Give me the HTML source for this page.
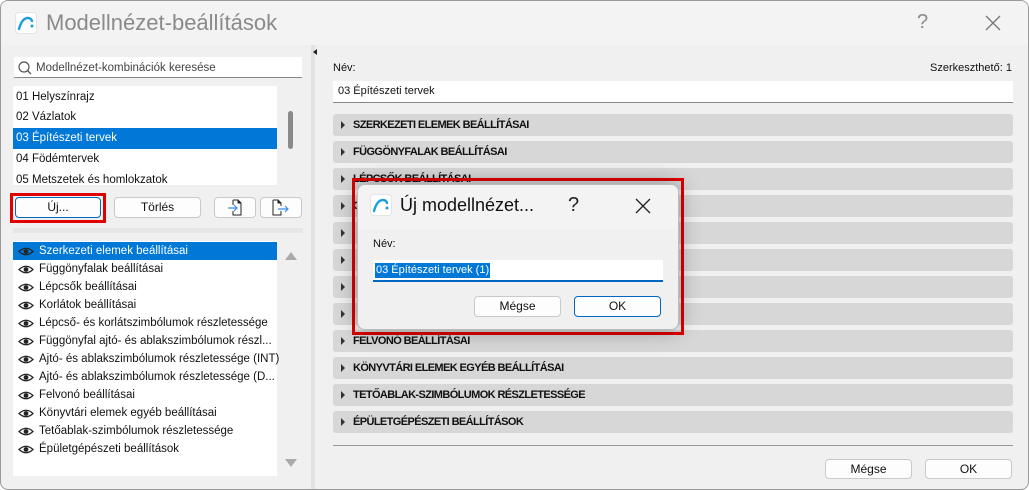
<!DOCTYPE html>
<html><head><meta charset="utf-8"><style>
*{box-sizing:border-box;margin:0;padding:0}
body{width:1029px;height:490px;background:#fff;font-family:"Liberation Sans",sans-serif;font-size:12px;color:#111;position:relative;overflow:hidden}
.abs{position:absolute}
.win{left:0;top:0;width:1029px;height:490px;border:1px solid #9a9a9a;border-radius:8px;background:#f0f0f0;overflow:hidden}
.tb{left:0;top:0;width:1029px;height:44px;background:#f3f3f3}
.btn{position:absolute;background:#fdfdfd;border:1px solid #c9c9c9;border-radius:4px;text-align:center;line-height:19px;font-size:12px;color:#111}
.row{position:absolute;left:332px;width:680px;height:22px;background:#d7d7d7;border-radius:3px;font-weight:bold;font-size:11px;line-height:22px;padding-left:20px;letter-spacing:-0.6px;color:#111}
.row:before{content:"";position:absolute;left:8px;top:7px;border-left:4px solid #333;border-top:4px solid transparent;border-bottom:4px solid transparent}
.it{position:absolute;left:12px;width:264px;height:18px;line-height:18px;padding-left:26px;font-size:11.5px;white-space:nowrap}
.it.sel{background:#0078d7;color:#fff}
.eye{position:absolute;left:5px;top:5px;width:16px;height:9px}
.li{position:absolute;left:12px;width:264px;height:21px;line-height:21px;padding-left:3px;font-size:11.5px}
</style></head><body>
<div class="abs win">
<div class="abs tb"></div>
<svg class="abs" style="left:14px;top:11px" width="22" height="22" viewBox="0 0 22 22"><rect x="0.5" y="0.5" width="21" height="21" rx="3" fill="#fff" stroke="#e4e4e4"/><path d="M4 17 Q7 6 13 6 Q16 6 17 9" fill="none" stroke="#1aa0d8" stroke-width="2.4" stroke-linecap="round"/><circle cx="17" cy="14" r="1.5" fill="#1aa0d8"/></svg>
<div class="abs" style="left:45px;top:9px;font-size:22px;color:#8a8a8a">Modellnézet-beállítások</div>
<div class="abs" style="left:916px;top:10px;font-size:20px;color:#8a8a8a">?</div>
<svg class="abs" style="left:984px;top:14px" width="16" height="16"><path d="M1 1L15 15M15 1L1 15" stroke="#777" stroke-width="1.3"/></svg>

<div class="abs" style="left:13px;top:56px;width:288px;height:21px;background:#fff;border-bottom:1px solid #888"></div>
<svg class="abs" style="left:16px;top:59px" width="16" height="16"><circle cx="7" cy="7" r="5" fill="none" stroke="#555" stroke-width="1.2"/><path d="M10.5 10.5L14 14" stroke="#555" stroke-width="1.3"/></svg>
<div class="abs" style="left:35px;top:61px;font-size:11.5px;color:#444">Modellnézet-kombinációk keresése</div>
<div class="abs" style="left:12px;top:85px;width:264px;height:99px;background:#fff"></div>
<div class="li" style="top:86px">01 Helyszínrajz</div>
<div class="li" style="top:106px">02 Vázlatok</div>
<div class="li" style="top:127px;background:#0078d7;color:#fff">03 Építészeti tervek</div>
<div class="li" style="top:148px">04 Födémtervek</div>
<div class="li" style="top:169px;height:15px;overflow:hidden;line-height:21px">05 Metszetek és homlokzatok</div>
<div class="abs" style="left:287px;top:110px;width:5px;height:38px;background:#8a8a8a;border-radius:3px"></div>

<div class="abs" style="left:9px;top:192px;width:96px;height:30px;border:3px solid #e00000"></div>
<div class="btn" style="left:14px;top:196px;width:86px;height:21px;border-color:#0067c0">Új...</div>
<div class="btn" style="left:113px;top:196px;width:87px;height:21px">Törlés</div>
<div class="btn" style="left:213px;top:196px;width:42px;height:21px"></div>
<div class="btn" style="left:259px;top:196px;width:42px;height:21px"></div>
<svg class="abs" style="left:226px;top:198px" width="20" height="18"><path d="M6 1H11L14 4V16H6V12M6 6V1" fill="none" stroke="#222" stroke-width="1"/><path d="M11 1V4H14" fill="#222" stroke="#222"/><path d="M1 9H10M7 6L10 9L7 12" fill="none" stroke="#3a8ee6" stroke-width="1.2"/></svg>
<svg class="abs" style="left:270px;top:198px" width="22" height="18"><path d="M2 1H7L10 4V7M10 12V16H2V1" fill="none" stroke="#222" stroke-width="1"/><path d="M7 1V4H10" fill="#222" stroke="#222"/><path d="M7 10H17M14 7L17 10L14 13" fill="none" stroke="#3a8ee6" stroke-width="1.2"/></svg>
<div class="abs" style="left:12px;top:227px;width:290px;height:5px;background:#e6e6e6"></div>

<div class="abs" style="left:12px;top:240px;width:264px;height:235px;background:#fff"></div>
<svg width="0" height="0" style="position:absolute"><defs><symbol id="e" viewBox="0 0 16 9"><path d="M1 4.5Q8 -2 15 4.5Q8 11 1 4.5Z" fill="none" stroke="#222" stroke-width="1.2"/><circle cx="8" cy="4.5" r="2.4" fill="#222"/></symbol></defs></svg>
<div class="it sel" style="top:241px"><svg class="eye"><use href="#e"/></svg>Szerkezeti elemek beállításai</div>
<div class="it" style="top:259px"><svg class="eye"><use href="#e"/></svg>Függönyfalak beállításai</div>
<div class="it" style="top:277px"><svg class="eye"><use href="#e"/></svg>Lépcsők beállításai</div>
<div class="it" style="top:295px"><svg class="eye"><use href="#e"/></svg>Korlátok beállításai</div>
<div class="it" style="top:313px"><svg class="eye"><use href="#e"/></svg>Lépcső- és korlátszimbólumok részletessége</div>
<div class="it" style="top:331px"><svg class="eye"><use href="#e"/></svg>Függönyfal ajtó- és ablakszimbólumok részl...</div>
<div class="it" style="top:349px"><svg class="eye"><use href="#e"/></svg>Ajtó- és ablakszimbólumok részletessége (INT)</div>
<div class="it" style="top:367px"><svg class="eye"><use href="#e"/></svg>Ajtó- és ablakszimbólumok részletessége (D...</div>
<div class="it" style="top:385px"><svg class="eye"><use href="#e"/></svg>Felvonó beállításai</div>
<div class="it" style="top:403px"><svg class="eye"><use href="#e"/></svg>Könyvtári elemek egyéb beállításai</div>
<div class="it" style="top:421px"><svg class="eye"><use href="#e"/></svg>Tetőablak-szimbólumok részletessége</div>
<div class="it" style="top:439px"><svg class="eye"><use href="#e"/></svg>Épületgépészeti beállítások</div>
<div class="abs" style="left:284px;top:251px;border-bottom:8px solid #aaa;border-left:6px solid transparent;border-right:6px solid transparent"></div>
<div class="abs" style="left:284px;top:458px;border-top:8px solid #aaa;border-left:6px solid transparent;border-right:6px solid transparent"></div>
<div class="abs" style="left:310px;top:44px;width:4px;height:446px;background:#e2e2e2"></div>
<div class="abs" style="left:312px;top:48px;border-right:4px solid #222;border-top:3px solid transparent;border-bottom:3px solid transparent"></div>

<div class="abs" style="left:332px;top:61px;font-size:11px">Név:</div>
<div class="abs" style="left:929px;top:61px;font-size:11px">Szerkeszthető: 1</div>
<div class="abs" style="left:332px;top:80px;width:680px;height:22px;background:#fff;border-bottom:1px solid #888;font-size:11px;line-height:21px;padding-left:5px">03 Építészeti tervek</div>
<div class="row" style="top:113px">SZERKEZETI ELEMEK BEÁLLÍTÁSAI</div>
<div class="row" style="top:140px">FÜGGÖNYFALAK BEÁLLÍTÁSAI</div>
<div class="row" style="top:167px">LÉPCSŐK BEÁLLÍTÁSAI</div>
<div class="row" style="top:194px">G</div>
<div class="row" style="top:221px"></div>
<div class="row" style="top:248px"></div>
<div class="row" style="top:275px"></div>
<div class="row" style="top:302px"></div>
<div class="row" style="top:329px">FELVONÓ BEÁLLÍTÁSAI</div>
<div class="row" style="top:356px">KÖNYVTÁRI ELEMEK EGYÉB BEÁLLÍTÁSAI</div>
<div class="row" style="top:383px">TETŐABLAK-SZIMBÓLUMOK RÉSZLETESSÉGE</div>
<div class="row" style="top:410px">ÉPÜLETGÉPÉSZETI BEÁLLÍTÁSOK</div>
<div class="abs" style="left:332px;top:444px;width:680px;height:1px;background:#999"></div>
<div class="btn" style="left:824px;top:458px;width:87px;height:20px">Mégse</div>
<div class="btn" style="left:924px;top:458px;width:87px;height:20px">OK</div>
</div>

<div class="abs" style="left:352px;top:178px;width:332px;height:157px;border:3px solid #e00000"></div>
<div class="abs" style="left:357px;top:184px;width:322px;height:146px;background:#f0f0f0;border:1px solid #bbb;border-radius:8px;box-shadow:0 0 22px rgba(0,0,0,0.35);overflow:hidden">
<div class="abs" style="left:0;top:0;width:322px;height:44px;background:#f3f3f3"></div>
<svg class="abs" style="left:12px;top:9px" width="22" height="22" viewBox="0 0 22 22"><rect x="0.5" y="0.5" width="21" height="21" rx="3" fill="#fff" stroke="#e4e4e4"/><path d="M4 17 Q7 6 13 6 Q16 6 17 9" fill="none" stroke="#1aa0d8" stroke-width="2.4" stroke-linecap="round"/><circle cx="17" cy="14" r="1.5" fill="#1aa0d8"/></svg>
<div class="abs" style="left:42px;top:10px;font-size:18px;color:#111">Új modellnézet...</div>
<div class="abs" style="left:210px;top:9px;font-size:20px;color:#222">?</div>
<svg class="abs" style="left:277px;top:13px" width="16" height="16"><path d="M1 1L15 15M15 1L1 15" stroke="#222" stroke-width="1.3"/></svg>
<div class="abs" style="left:15px;top:53px;font-size:11px">Név:</div>
<div class="abs" style="left:15px;top:75px;width:290px;height:22px;background:#fff;border-bottom:2px solid #0067c0"></div>
<div class="abs" style="left:17px;top:78px;height:15px;background:#0078d7;color:#fff;font-size:11px;line-height:15px;padding:0 1px">03 Építészeti tervek (1)</div>
<div class="btn" style="left:116px;top:111px;width:87px;height:21px">Mégse</div>
<div class="btn" style="left:216px;top:111px;width:87px;height:21px;border-color:#0067c0">OK</div>
</div>
</body></html>
